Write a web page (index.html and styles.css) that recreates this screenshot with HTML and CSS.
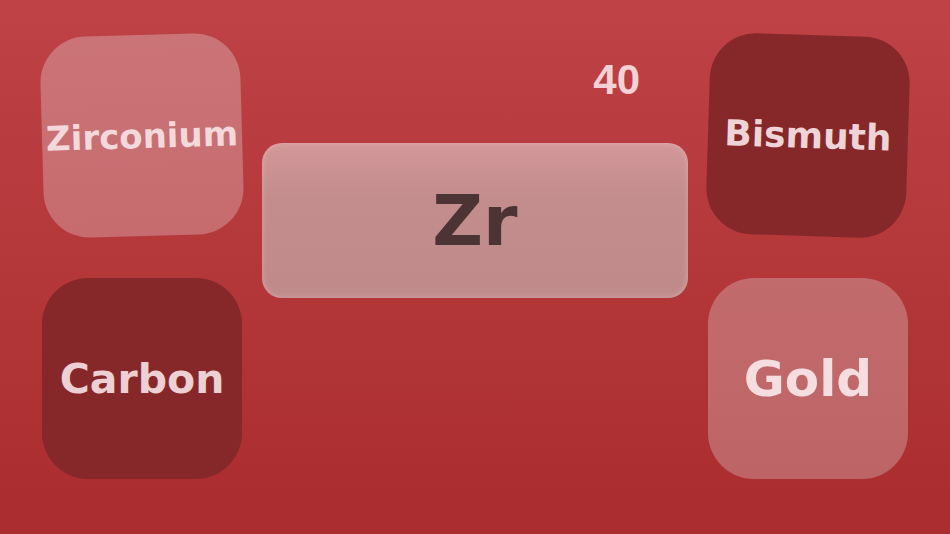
FILE: index.html
```html
<!DOCTYPE html>
<html lang="en">
<head>
<meta charset="utf-8">
<title>Element Quiz</title>
<link rel="stylesheet" href="styles.css">
</head>
<body>
<main class="board">
  <div class="card card-light tilt-left"><span class="label label-zirconium">Zirconium</span></div>
  <section class="center">
    <div class="score">40</div>
    <div class="symbol-card"><span class="symbol">Zr</span></div>
  </section>
  <div class="card card-dark tilt-right"><span class="label label-bismuth">Bismuth</span></div>
  <div class="card card-dark"><span class="label label-carbon">Carbon</span></div>
  <div class="card card-light card-gold"><span class="label label-gold">Gold</span></div>
</main>
</body>
</html>
```

FILE: styles.css
```css
html, body {
  margin: 0;
  padding: 0;
}
body {
  width: 950px;
  height: 534px;
  overflow: hidden;
  background: linear-gradient(to bottom, #be4246 0%, #b5383b 45%, #aa2c2f 100%);
  font-family: "DejaVu Sans", "Liberation Sans", sans-serif;
}
.board {
  display: grid;
  grid-template-columns: 200px 426px 200px;
  grid-template-rows: 201px 201px;
  column-gap: 20px;
  row-gap: 42px;
  padding: 35px 0 0 42px;
}
.card {
  border-radius: 46px;
  display: flex;
  align-items: center;
  justify-content: center;
}
.card-light {
  background: linear-gradient(to bottom, #cb7478, #c66b6e);
}
.card-gold {
  background: linear-gradient(to bottom, #c26b6d, #bd6466);
}
.card-dark {
  background: #86282a;
}
.tilt-left {
  transform: rotate(-1.6deg);
}
.tilt-right {
  transform: rotate(1.8deg);
}
.label {
  font-weight: bold;
  color: #f3d9dc;
  white-space: nowrap;
}
.label-zirconium { font-size: 34px; }
.label-bismuth { font-size: 36px; color: #eed4d7; }
.label-carbon { font-size: 41px; color: #ecd0d3; }
.label-gold { font-size: 50px; color: #f5dde0; }
.center {
  grid-column: 2;
  grid-row: 1 / span 2;
  display: flex;
  flex-direction: column;
}
.score {
  margin-top: 24px;
  align-self: flex-end;
  margin-right: 48px;
  font-family: "Liberation Sans", Arial, sans-serif;
  font-weight: bold;
  font-size: 42px;
  line-height: 42px;
  color: #f2d2d4;
}
.symbol-card {
  margin-top: 42px;
  height: 155px;
  border-radius: 20px;
  background: linear-gradient(to bottom, #d39799 0%, #c38c8d 35%, #c08a8b 100%);
  box-shadow: inset 0 0 6px rgba(255, 220, 222, 0.35);
  display: flex;
  align-items: center;
  justify-content: center;
}
.symbol {
  font-weight: bold;
  font-size: 70px;
  color: #4c3334;
}
```
